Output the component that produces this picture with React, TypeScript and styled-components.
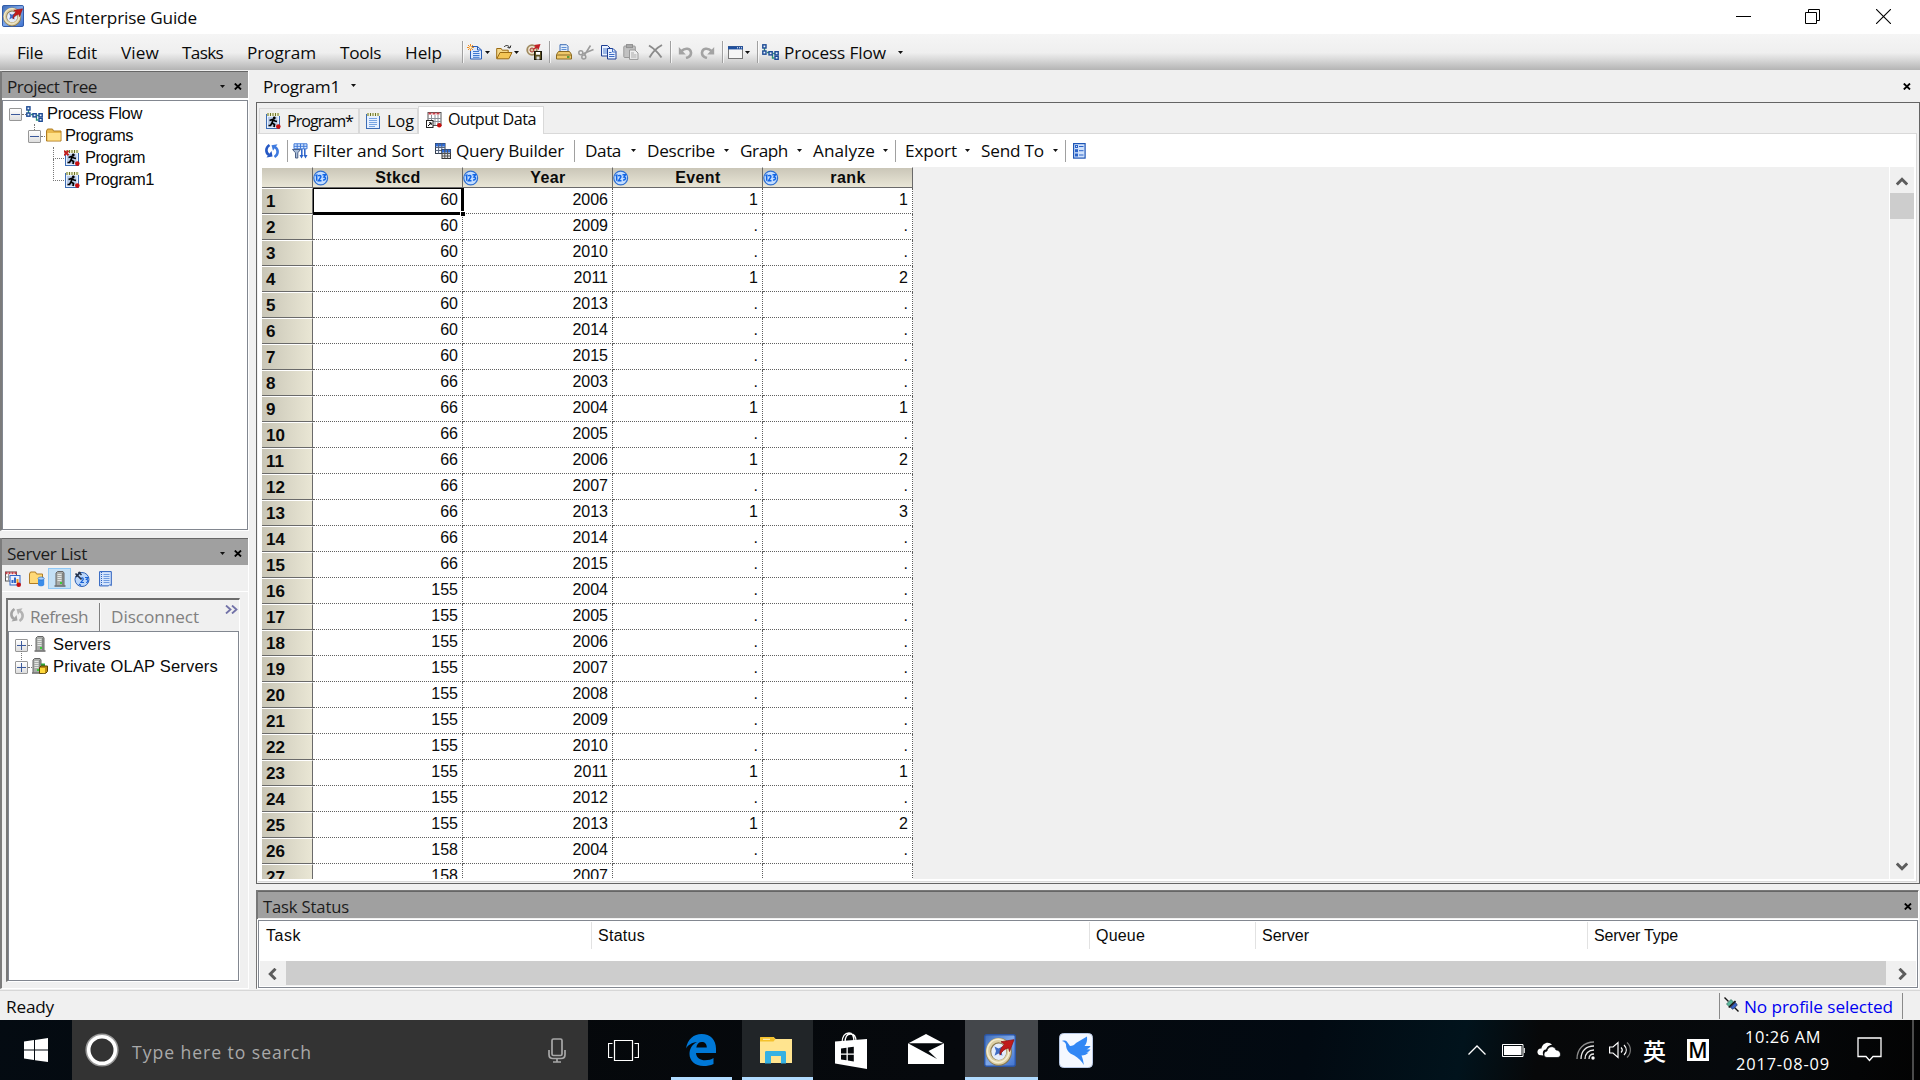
import React, { useLayoutEffect, useRef, useState } from "react";
import styled, { createGlobalStyle, css } from "styled-components";

const ui = `"Open Sans", "Noto Sans", sans-serif`;
const arial = `"Liberation Sans", Arial, sans-serif`;

const GlobalStyle = createGlobalStyle`
  * { box-sizing: border-box; }
  html, body { margin: 0; padding: 0; background: #f0f0f0; }
  body { width: 1920px; height: 1080px; overflow: hidden; }
  svg { display: block; flex: none; }
`;

/* ---------- text ---------- */

const LabelText = styled.span<{ $size: number; $font: string; $color: string; $bold?: boolean; $gap: number; $up: number }>`
  flex: none;
  display: block;
  white-space: pre;
  margin-left: ${(p) => p.$gap}px;
  margin-bottom: ${(p) => p.$up}px;
  font: ${(p) => (p.$bold ? 700 : 400)} ${(p) => p.$size}px / 1.3 ${(p) => p.$font};
  color: ${(p) => p.$color};
`;

type LabelProps = {
  children: string;
  w: number;
  size?: number;
  font?: string;
  color?: string;
  bold?: boolean;
  gap?: number;
  up?: number;
};

/* Caption that tracks its letters in or out to fill the given width. */
function Label({ children, w, size = 17.2, font = ui, color = "#0a0a0a", bold, gap = 0, up = 0 }: LabelProps) {
  const ref = useRef<HTMLSpanElement>(null);
  const [spacing, setSpacing] = useState(0);
  useLayoutEffect(() => {
    const el = ref.current;
    if (!el) return;
    const range = document.createRange();
    range.selectNodeContents(el);
    setSpacing((w - range.getBoundingClientRect().width) / children.length);
  }, [w, children]);
  return (
    <LabelText ref={ref} $size={size} $font={font} $color={color} $bold={bold} $gap={gap} $up={up} style={{ width: w, letterSpacing: spacing }}>
      {children}
    </LabelText>
  );
}

/* ---------- icons ---------- */

const Svg = styled.svg<{ $gap?: number; $up?: number }>`
  margin-left: ${(p) => p.$gap ?? 0}px;
  margin-bottom: ${(p) => p.$up ?? 0}px;
`;
type IconProps = { gap?: number; up?: number; size?: number };
const I = ({ w = 16, h = 16, vw, vh, gap, up, children }: { w?: number; h?: number; vw?: number; vh?: number; gap?: number; up?: number; children: React.ReactNode }) => (
  <Svg width={w} height={h} viewBox={`0 0 ${vw ?? w} ${vh ?? h}`} fill="none" $gap={gap} $up={up}>
    {children}
  </Svg>
);

const SasIcon = ({ w = 22, h = 22, gap }: { w?: number; h?: number; gap?: number }) => (
  <Svg width={w} height={h} viewBox="0 0 32 32" preserveAspectRatio="none" fill="none" $gap={gap}>
    <defs>
      <linearGradient id="sasbg" x1="0" y1="0" x2="1" y2="1">
        <stop offset="0" stopColor="#3d6cb8" />
        <stop offset="0.5" stopColor="#7fa8e8" />
        <stop offset="1" stopColor="#3f72cf" />
      </linearGradient>
    </defs>
    <rect x="0.7" y="0.7" width="30.6" height="30.6" rx="2" fill="url(#sasbg)" stroke="#2c56a5" strokeWidth="1.4" />
    <ellipse cx="14.8" cy="17.3" rx="10.3" ry="10.8" fill="#e4ecfa" stroke="#8a7a52" strokeWidth="5.6" />
    <ellipse cx="14.5" cy="16.8" rx="10.4" ry="10.8" stroke="#dccfa4" strokeWidth="4.2" />
    <ellipse cx="14.2" cy="16.4" rx="10.8" ry="11.2" stroke="#f4edd2" strokeWidth="1.4" />
    <path d="M10.500 12l4 2 4-2-1.500 4.500 1.500 4.500-4-2-4 2 1.500-4.500z" fill="#3f6cc4" />
    <path d="M30 5.500L17 7.500l3.500 2.500c-3.500 3-5 6.500-4.500 10.500 2-4 4.500-6 8.500-7l1 3.500z" fill="#c11b1b" stroke="#8b1010" strokeWidth="0.7" />
  </Svg>
);

const FlowIcon = ({ gap, up }: IconProps) => (
  <I w={17} h={16} gap={gap} up={up}>
    <path d="M2.500 4v5M5 8.500h3M10.500 11v3h2M11 9.500h2" stroke="#2c9377" strokeWidth="1.3" />
    <g stroke="#1c4a94" strokeWidth="1.400" fill="#eaf2ff">
      <rect x="0.8" y="0.800" width="3.200" height="3.200" />
      <rect x="0.8" y="7" width="3.200" height="3.200" />
      <rect x="7" y="7.700" width="3.200" height="3.200" />
      <rect x="13" y="7.700" width="3.200" height="3.200" />
      <rect x="13" y="12.300" width="3.200" height="3" />
    </g>
  </I>
);

const Notepad = ({ runner, deleted, gap, up }: IconProps & { runner?: boolean; deleted?: boolean }) => (
  <I w={16} h={16} gap={gap} up={up}>
    <rect x="1.500" y="1.500" width="13" height="14" fill="#e6f0ff" stroke="#3c6cb4" />
    <path d="M2 1.500h13" stroke="#f2f4d0" strokeWidth="3" />
    <path d="M3 0v3M5.500 0v3M8 0v3M10.500 0v3M13 0v3" stroke="#6b7128" strokeWidth="1" />
    {runner ? (
      <>
        <rect x="3" y="4" width="9.500" height="10" fill="#b9cbe6" />
        <circle cx="9.300" cy="5" r="1.400" fill="#000" />
        <path d="M4.500 7.500l3-1 2.500 1.500 2 .5M8 7.200L7 10l2.500 1.500-.5 2.500M7 10l-1.500 2.500H3.500" stroke="#000" strokeWidth="1.700" />
        <circle cx="13.300" cy="13.600" r="2.300" fill="#c80f0f" />
      </>
    ) : (
      <path d="M4 5.500h8M4 7.500h8M4 9.500h8M4 11.500h8M4 13.500h6" stroke="#77a4e2" />
    )}
    {deleted && <path d="M0 .8l4.500 4.500M4.500.8L0 5.300" stroke="#c22020" strokeWidth="2" />}
  </I>
);

const OutputIcon = ({ gap, up }: IconProps) => (
  <I gap={gap} up={up}>
    <rect x="2" y="0.500" width="13" height="13" fill="#fff" stroke="#555" />
    <path d="M2.500 1.500h12" stroke="#c9404a" strokeWidth="2" strokeDasharray="3 1" />
    <path d="M5.500 3v10M9 3v10M12 3v10M2 6.500h13M2 9.500h13" stroke="#8b9099" />
    <rect x="0.500" y="8.500" width="6.500" height="7" fill="#fff" stroke="#222" />
    <path d="M2 14l3-3M3 10.800h2.200V13" stroke="#000" />
    <circle cx="13.300" cy="13.300" r="2.300" fill="#c80f0f" />
  </I>
);

const Folder = ({ gap, up }: IconProps) => (
  <I w={16} h={14} gap={gap} up={up}>
    <path d="M.5 13V3l1-2h5l1 2h7.500v10z" fill="#e9b84d" stroke="#b07c22" />
    <path d="M1.500 12.500V5h13v7.500z" fill="#ffe08a" />
  </I>
);

const RefreshIcon = ({ gap, grey, up }: IconProps & { grey?: boolean }) => {
  const c = grey ? "#a3a3a3" : "#2558c4";
  return (
    <I gap={gap} up={up}>
      <path d="M5.500 2C1.500 4.500 1.300 9.500 5 12" stroke={c} strokeWidth="2.600" />
      <path d="M2.500 14.500l6-1-1-5.500z" fill={c} />
      <path d="M10.500 14c4-2.500 4.200-7.500.5-10" stroke={grey ? "#b3b3b3" : "#3f7be0"} strokeWidth="2.600" />
      <path d="M13.500 1.200l-6 1 1.500 5.500z" fill={grey ? "#b3b3b3" : "#3f7be0"} />
    </I>
  );
};

const NewIcon = ({ gap }: IconProps) => (
  <I gap={gap}>
    <path d="M3.500 2.500h7l4 3.500v9h-11z" fill="#dbe9ff" stroke="#2c5fb5" />
    <path d="M10.500 2.500V6h4" stroke="#2c5fb5" />
    <path d="M6 7.500h6M6 9.500h6.500M6 11.500h6.500M6 13.300h6.500" stroke="#3f78cf" />
    <path d="M3.500 0v7M0 3.500h7M1 1l5 5M6 1L1 6" stroke="#f08a1d" />
    <circle cx="3.500" cy="3.500" r="1.300" fill="#fff3c4" />
  </I>
);
const OpenIcon = ({ gap }: IconProps) => (
  <I w={17} gap={gap}>
    <path d="M.7 14.500v-10h4.500l1 1.700h6v2" fill="#f5d98c" stroke="#9a6a12" />
    <path d="M.8 14.800L4 8.500h12l-3.200 6.300z" fill="#f3c556" stroke="#9a6a12" />
    <path d="M8 3c1.500-2 4.500-2 5.500.5M11.500 3.500l2.500.5.800-2.500" stroke="#222" />
  </I>
);
const SasSaveIcon = ({ gap }: IconProps) => (
  <I gap={gap}>
    <circle cx="6" cy="6" r="4.800" stroke="#a08a60" strokeWidth="1.800" fill="#efe6cf" />
    <circle cx="6" cy="6" r="2" stroke="#a33" fill="#d9c6a0" />
    <path d="M14.500 0L8 1l1.500 1.500L6.500 6 11 4l1.500 2z" fill="#c22026" />
    <rect x="8.500" y="7.500" width="7" height="8" fill="#5a4e1e" stroke="#1d1a0c" />
    <rect x="10" y="8" width="4" height="2.700" fill="#fff" />
    <rect x="10.500" y="12.500" width="3" height="3" fill="#ddd" />
  </I>
);
const PrintIcon = ({ gap }: IconProps) => (
  <I gap={gap}>
    <path d="M4 8V.7h6.500l1.500 1.500V8z" fill="#e3eefc" stroke="#3c6cb4" />
    <path d="M5.500 3.500h5M5.500 5.500h5" stroke="#5d8fd6" />
    <path d="M2.500 7.500h11l2 3v4.500H.5v-4.500z" fill="#efc96a" stroke="#8a6a22" />
    <path d="M1 11h14" stroke="#8a6a22" />
    <path d="M11 13h2.500" stroke="#2c8c2c" strokeWidth="1.500" />
  </I>
);
const CutIcon = ({ gap }: IconProps) => (
  <I gap={gap}>
    <path d="M15.500 5.500L5 9.800M12.500 1.500L6.500 11" stroke="#9c9c9c" strokeWidth="1.600" />
    <circle cx="2.800" cy="8.800" r="2" stroke="#9c9c9c" strokeWidth="1.500" />
    <circle cx="5.800" cy="13" r="2" stroke="#9c9c9c" strokeWidth="1.500" />
  </I>
);
const CopyIcon = ({ gap }: IconProps) => (
  <I gap={gap}>
    <path d="M.5 1.500h6l2.500 2.500v8H.5z" fill="#eaf2ff" stroke="#1e3f93" />
    <path d="M2 5h4.500M2 7h4M2 9h4" stroke="#4f7ed0" />
    <path d="M6.500 4.500h5.500l3 3v7.500H6.500z" fill="#eaf2ff" stroke="#1e3f93" />
    <path d="M11.500 4.500V8H15M8 8.500h2.500M8 10.500h5.500M8 12.500h5.500" stroke="#3f6cc4" />
  </I>
);
const PasteIcon = ({ gap }: IconProps) => (
  <I gap={gap}>
    <rect x=".8" y="2" width="11.500" height="11.500" rx="1" fill="#c2c2c2" stroke="#999" />
    <rect x="3.500" y=".6" width="6" height="3" fill="#aaa" stroke="#8f8f8f" />
    <path d="M6.500 6h5.500l3 3v6.400H6.500z" fill="#eee" stroke="#999" />
    <path d="M8 9h3M8 11h5.500M8 13h5.500" stroke="#a9a9a9" />
  </I>
);
const DeleteIcon = ({ gap }: IconProps) => (
  <I w={15} h={15} gap={gap} up={2}>
    <path d="M1 1.500c5 3 9 7 12.500 12M14 1C8.500 4 4.500 8 1.500 13.500" stroke="#8b8b8b" strokeWidth="1.900" />
  </I>
);
const UndoIcon = ({ gap, flip }: IconProps & { flip?: boolean }) => (
  <I w={15} h={13} gap={gap}>
    <g transform={flip ? "translate(15 0) scale(-1 1)" : undefined}>
      <path d="M3.500 5C7 1.500 12.500 2 13 6.500c.2 2.500-1.500 4.500-5 5.500" stroke="#a3a3a3" strokeWidth="2.600" />
      <path d="M.8 1v7.500h7z" fill="#a3a3a3" />
    </g>
  </I>
);
const WindowIcon = ({ gap }: IconProps) => (
  <I w={15} h={13} gap={gap}>
    <rect x=".5" y=".5" width="14" height="12" fill="#f6f6f6" stroke="#777" />
    <path d="M0 1.800h15" stroke="#1e4f9e" strokeWidth="3.200" />
    <path d="M9 1.800h1M11 1.800h1M13 1.800h1" stroke="#fff" />
  </I>
);
const FilterIcon = ({ gap }: IconProps) => (
  <I gap={gap}>
    <path d="M2 .8h13v5H2zM5.200.8v5M8.500.8v5M11.800.8v5M2 3.300h13" stroke="#3f78d8" fill="#dceaff" />
    <path d="M.5 6.500h8L5.800 9.800V15H3.500V9.800z" fill="#a9bdd9" stroke="#4a5f86" />
    <path d="M9.800 6v7M12.800 6v7" stroke="#2a62c9" strokeWidth="1.500" />
    <path d="M7.500 12h4l-2 3.500zM11.500 12h4l-2 3.500z" fill="#2a62c9" />
  </I>
);
const QueryIcon = ({ gap }: IconProps) => (
  <I gap={gap}>
    <rect x=".5" y=".5" width="9.500" height="10" fill="#f4f8ff" stroke="#333c4d" />
    <path d="M.5 2h9.500" stroke="#2d6bd6" strokeWidth="3" />
    <path d="M3.600.5v10M6.800.5v10M.5 4.500h9.500M.5 7.500h9.500" stroke="#55657f" />
    <rect x="7" y="6.500" width="8.500" height="9" fill="#e6e6e6" stroke="#333" />
    <path d="M7 8h8.500" stroke="#2d6bd6" strokeWidth="3" />
    <path d="M9.800 6.500v9M12.600 6.500v9M7 10.500h8.500M7 13h8.500" stroke="#555" />
  </I>
);
const PropsIcon = ({ gap }: IconProps) => (
  <I w={13} h={16} gap={gap}>
    <rect x=".6" y=".6" width="11.500" height="14.500" fill="#cfe1fb" stroke="#1e55b5" strokeWidth="1.200" />
    <g stroke="#2a62c9"><rect x="2.500" y="2.500" width="2" height="2" /><rect x="2.500" y="6.700" width="2" height="2" /><rect x="2.500" y="11" width="2" height="2" /><path d="M6 3.500h4.500M6 7.700h4.500M6 12h4.500" /></g>
  </I>
);
const NumBadge = () => (
  <I w={16} h={16}>
    <circle cx="7.700" cy="8" r="6.900" fill="#c3ddff" stroke="#2e6fd0" strokeWidth="1.200" />
    <path d="M2.500 6l1.200-.8v5.600M5.300 6.300c.5-1.500 3-1 2.500.8L5.500 10.800h3M9.500 4.700h3L11 7c2.300 0 2 3.500-1 3" stroke="#1165e6" strokeWidth="1.500" />
  </I>
);
const ServerIcon = ({ gap, olap, up }: IconProps & { olap?: boolean }) => (
  <I w={16} h={16} gap={gap} up={up}>
    <g transform={olap ? "translate(-3 0)" : undefined}>
      <path d="M4 14.500V2l1.500-1.500H11L12 2v12.500" fill="#a9aca9" stroke="#666" />
      <path d="M5.500 3.500h4M5.500 5.500h4M5.500 7.500h4M5.500 9.500h4" stroke="#e3e6e3" />
      <path d="M10.800 2v12" stroke="#6f736f" />
      <path d="M8 12h2" stroke="#37d037" strokeWidth="2" />
      <path d="M2.500 15h11" stroke="#666" strokeWidth="1.500" />
    </g>
    {olap && (
      <>
        <path d="M9 5.500h4v4H9z" fill="#2da23a" />
        <path d="M7.500 9.500l1.500-1.500h6.500v5.500l-1.800 1.800H7.500z" fill="#b98a12" stroke="#5c4300" />
        <path d="M8 10h5v5H8z" fill="#ffd93b" />
      </>
    )}
  </I>
);
const ReportIcon = ({ gap }: IconProps) => (
  <I gap={gap}>
    <rect x=".5" y="1" width="11" height="9" fill="#fff" stroke="#555" />
    <path d="M.5 2h11" stroke="#c9404a" strokeWidth="2.500" strokeDasharray="2 1" />
    <path d="M3.500 3v7M.5 6h8" stroke="#999" />
    <rect x="5" y="4.500" width="10" height="9.500" fill="#e9f1ff" stroke="#2f67c7" />
    <path d="M7.500 12V9M10 12V6.500" stroke="#2f67c7" strokeWidth="2" /><path d="M12.500 12V8" stroke="#ef9b22" strokeWidth="2" />
    <circle cx="13.700" cy="13.700" r="2.300" fill="#c80f0f" />
  </I>
);
const FolderDataIcon = ({ gap }: IconProps) => (
  <I gap={gap}>
    <path d="M.5 12.500V3l1-2h5l1 2h6v9.500z" fill="#ffd977" stroke="#b07c22" />
    <path d="M9 7.500v6.500c1 1.700 5 1.700 6.200 0V7.500z" fill="#3b8ce8" />
    <ellipse cx="12.100" cy="7.500" rx="3.100" ry="1.500" fill="#a7d0ff" stroke="#1c62b9" strokeWidth=".6" />
  </I>
);
const GlobeIcon = ({ gap }: IconProps) => (
  <I gap={gap}>
    <circle cx="8" cy="8.500" r="7" fill="#bcd7fa" stroke="#2e62b5" />
    <path d="M7 7.500c2-1.500 3.200.5 1.500 2L7 11.500h3M11 6.500h3l-1.500 2c2 0 2 3-.5 3M5 13l2 1.500" stroke="#1761d6" strokeWidth="1.200" />
    <path d="M1.500 2.500l6 6M6.500 1L2 6M4.500 1l3 3" stroke="#26344c" strokeWidth="1.700" />
  </I>
);
const BookIcon = ({ gap }: IconProps) => (
  <I w={13} h={16} gap={gap}>
    <path d="M.6.600h11.700v14l-1.500-1-1.300 1.300H.6z" fill="#d5e5fd" stroke="#2a60bf" />
    <path d="M2.500 1v14" stroke="#2a60bf" strokeDasharray="1 1" />
    <path d="M4.500 3.500h6M4.500 5.500h6M4.500 7.500h6M4.500 9.500h6M4.500 11.500h6" stroke="#6f9be0" />
  </I>
);
const PlugIcon = () => (
  <I w={15} h={15} up={3}>
    <path d="M.5.500l4 4M10.500 10.500l4 4" stroke="#111" strokeWidth="1.400" />
    <path d="M2.500 7l4.500-4.500 2.500 2.500L5 9.500z" fill="#59b59a" stroke="#2c6d5c" strokeWidth=".7" />
    <path d="M6.500 10.500l5-5 1.800 2.500-4.300 4.300z" fill="#3762c4" stroke="#14255c" strokeWidth=".7" />
    <path d="M4.800 10.500L11.500 4" stroke="#111" strokeWidth="1.700" />
  </I>
);

const Arrow = ({ gap = 0, up = 0 }: { gap?: number; up?: number }) => (
  <I w={5} h={3} gap={gap} up={up}><path d="M0 0h5L2.500 3z" fill="#111" /></I>
);
const SmallX = ({ gap = 0 }: { gap?: number }) => (
  <I w={8} h={7} gap={gap} up={1}><path d="M.8.500l6.200 6M7 .5L.8 6.500" stroke="#000" strokeWidth="1.800" /></I>
);

/* ---------- title and menu bars ---------- */

const Screen = styled.div`
  width: 1920px; height: 1080px; display: flex; flex-direction: column;
  background: #f0f0f0; overflow: hidden;
`;
const TitleBar = styled.header`
  height: 34px; flex: none; display: flex; align-items: center; background: #fff; padding: 0 29px 2px 2px;
`;
const WindowButtons = styled.div`
  margin-left: auto; display: flex; align-items: center; gap: 54px;
`;
const MenuBar = styled.nav`
  height: 36px; flex: none; display: flex; align-items: center; padding-left: 17px;
  background: linear-gradient(#f5f5f5 0, #efefef 52%, #d8d8d8 72%, #b4b4b4 100%);
`;
const Sep = styled.i<{ $gap: number; $h?: number; $c?: string }>`
  flex: none; width: 2px; height: ${(p) => p.$h ?? 22}px; margin-left: ${(p) => p.$gap}px;
  border-left: 1px solid ${(p) => p.$c ?? "#a0a0a0"}; border-right: 1px solid #ffffffb0;
`;

/* ---------- body ---------- */

const Body = styled.main`height: 920px; flex: none; display: flex;`;
const SideColumn = styled.aside`
  width: 249px; flex: none; display: flex; flex-direction: column; padding-top: 1px;
`;
const Pane = styled.section<{ $h: number }>`
  height: ${(p) => p.$h}px; flex: none; display: flex; flex-direction: column;
  border-left: 2px solid #7c7c7c; border-right: 1px solid #fff; border-bottom: 1px solid #fff;
`;
const PaneHeader = styled.div<{ $right: number }>`
  height: 27px; flex: none; display: flex; align-items: center; background: #a0a0a0;
  border-top: 1px solid #666; padding: 3px ${(p) => p.$right}px 0 5px;
`;
const Push = styled.div`margin-left: auto; display: flex; align-items: center;`;
const TreeBox = styled.div<{ $top: number }>`
  flex: 1; border: 1px solid #828790; background: #fff; padding-top: ${(p) => p.$top}px;
`;
const TreeShell = styled.div`flex: 1; display: flex; flex-direction: column; background: #fff; padding-top: 2px;`;
const TreeRow = styled.div<{ $indent: number }>`
  height: 22px; display: flex; align-items: center; padding-left: ${(p) => p.$indent}px;
`;
const Expander = styled.span<{ $plus?: boolean }>`
  flex: none; width: 13px; height: 13px; border: 1px solid #979797; border-radius: 1px;
  background:
    linear-gradient(#3c5a9c, #3c5a9c) center / 9px 1px no-repeat,
    ${(p) => (p.$plus ? "linear-gradient(#3c5a9c, #3c5a9c) center / 1px 9px no-repeat," : "")}
    linear-gradient(#fff, #dedede);
`;
const Dots = styled.span<{ $w: number; $drop?: number }>`
  flex: none; width: ${(p) => p.$w}px; height: 1px; border-top: 1px dotted #777; position: relative;
  ${(p) => p.$drop && css`&::before { content: ""; position: absolute; left: 0; bottom: 0; height: ${p.$drop}px; border-left: 1px dotted #777; }`}
`;
const Stem = styled.span<{ $x: number; $h: number; $up: number }>`
  position: relative; width: 0; height: 0;
  &::before { content: ""; position: absolute; left: ${(p) => p.$x}px; bottom: ${(p) => p.$up}px; height: ${(p) => p.$h}px; border-left: 1px dotted #777; }
`;
const ServerTools = styled.div`
  height: 27px; flex: none; display: flex; align-items: center; padding: 1px 0 0 3px; border-bottom: 1px solid #fff;
`;
const ActiveTool = styled.span`
  width: 23px; height: 21px; margin-left: 3px; display: flex; align-items: center; justify-content: center;
  border: 1px solid #90c8f6; background: #c4e0f5;
`;
const InnerPane = styled.div`
  width: 234px; height: 384px; margin: 6px 0 0 4px; display: flex; flex-direction: column;
  border-left: 2px solid #777; border-top: 2px solid #6c6c6c; border-right: 1px solid #fff; border-bottom: 1px solid #fff;
`;
const InnerTools = styled.div`height: 31px; flex: none; display: flex; align-items: center; padding: 2px 3px 0 1px;`;

const MainColumn = styled.div`
  width: 1664px; margin-left: 7px; flex: none; display: flex; flex-direction: column;
`;
const DocHeader = styled.div`
  height: 32px; flex: none; display: flex; align-items: center; padding: 2px 9px 0 7px;
`;
const DocPanel = styled.section`
  height: 782px; flex: none; display: flex; flex-direction: column; border: 1px solid #646464; padding: 0 2px 1px 1px;
`;
const TabStrip = styled.div`
  height: 31px; flex: none; display: flex; align-items: flex-end; border-bottom: 1px solid #d9d9d9; padding-left: 1px;
`;
const Tab = styled.div<{ $w: number; $active?: boolean }>`
  width: ${(p) => p.$w}px; height: ${(p) => (p.$active ? 28 : 25)}px; flex: none; display: flex; align-items: center;
  border: 1px solid #d9d9d9; border-bottom: 0; margin-bottom: ${(p) => (p.$active ? -1 : 0)}px;
  background: ${(p) => (p.$active ? "#fff" : "#f0f0f0")};
  & + & { border-left-width: ${(p) => (p.$active ? 1 : 0)}px; }
`;
const DocBody = styled.div`
  flex: 1; display: flex; flex-direction: column; background: #fff; border-right: 1px solid #d9d9d9; border-bottom: 1px solid #d9d9d9;
  min-height: 0; padding-bottom: 2px;
`;
const DataTools = styled.div`height: 33px; flex: none; display: flex; align-items: center; padding-left: 6px;`;
const GridArea = styled.div`flex: 1; min-height: 0; display: flex; margin: 0 1px 0 4px; background: #f0f0f0; overflow: hidden;`;
const Grid = styled.div`width: 651px; flex: none; background: #fff;`;
const GridRow = styled.div`
  display: grid; grid-template-columns: 51px repeat(4, 150px); height: 26px;
`;
const HeadRow = styled(GridRow)`height: 21px;`;
const HeadCell = styled.div`
  display: flex; align-items: center; border-right: 1px solid #6a6a6a; border-bottom: 1px solid #6a6a6a;
  border-top: 1px solid #fff; background: linear-gradient(#cac6b8, #e9e6d6); overflow: hidden;
`;
const HeadName = styled.span`
  flex: 1; text-align: center; font: 700 16px/18px ${arial}; color: #0a0a0a; padding-left: 5px; letter-spacing: 0.4px;
`;
const RowHead = styled.div`
  border-right: 1px solid #6a6a6a; border-bottom: 1px solid #6a6a6a; border-top: 1px solid #fff;
  background: linear-gradient(90deg, #c9c6b7, #e9e6d4); padding: 4px 0 0 4px;
  font: 700 17px/18px ${arial}; color: #0a0a0a;
`;
const Cell = styled.div<{ $selected?: boolean }>`
  position: relative; border-right: 1px dotted #606060; border-bottom: 1px dotted #606060;
  text-align: right; padding: 3px 4px 0 0; font: 400 16px/18px ${arial}; color: #0a0a0a;
  ${(p) => p.$selected && css`
    &::before { content: ""; position: absolute; left: 0; top: 0; right: -2px; bottom: -2px; z-index: 1;
      border: solid #000; border-width: 1px 3px 3px 1px; }
    &::after { content: ""; position: absolute; right: -3px; bottom: -3px; width: 4px; height: 4px; z-index: 2;
      background: #000; border-left: 1px solid #fff; border-top: 1px solid #fff; }
  `}
`;
const VScroll = styled.div`
  margin-left: auto; width: 26px; flex: none; display: flex; flex-direction: column; align-items: center;
  border-left: 1px solid #fff; border-right: 1px solid #fff;
`;
const VThumb = styled.div`width: 24px; height: 26px; margin-top: 7px; background: #cdcdcd;`;
const VGap = styled.div<{ $h?: number }>`${(p) => (p.$h ? `height: ${p.$h}px;` : "flex: 1;")}`;

const TaskPanel = styled.section`
  height: 99px; margin-top: 6px; width: 1663px; display: flex; flex-direction: column;
  border: solid #777; border-width: 1px 0 0 2px; border-right: 1px solid #fff; border-bottom: 1px solid #fff;
`;
const TaskBox = styled.div`
  flex: 1; margin-top: 2px; border: 1px solid #828790; background: #fff; display: flex; flex-direction: column; outline: 1px solid #fff; outline-offset: 0;
`;
const TaskHead = styled.div`display: flex; height: 28px; padding-top: 1px; flex: none;`;
const TaskCol = styled.div<{ $w: number }>`
  width: ${(p) => p.$w}px; flex: none; display: flex; align-items: center; padding: 2px 0 0 6px; overflow: hidden;
  border-right: 1px solid #e2e2e2;
  &:last-child { border-right: 0; }
`;
const HScroll = styled.div`
  height: 25px; margin: 12px 1px 0; display: flex; align-items: center; background: #f0f0f0; padding: 0 9px 0 8px;
`;
const HThumb = styled.div`width: 1600px; height: 24px; align-self: flex-start; margin: 0 12px 0 9px; background: #cdcdcd;`;

const StatusBar = styled.footer`
  height: 30px; flex: none; border-top: 1px solid #d7d7d7; display: flex; align-items: center; padding: 1px 17px 0 6px;
`;
const Profile = styled.div`
  margin-left: auto; width: 184px; height: 26px; display: flex; align-items: center; padding-left: 4px;
  border-left: 1px solid #8a8a8a; border-right: 1px solid #8a8a8a;
`;

/* ---------- taskbar ---------- */

const Taskbar = styled.div`
  height: 60px; flex: none; display: flex; align-items: stretch;
  background: linear-gradient(100deg, #040b12 0, #05080b 25%, #06090d 50%, #020a12 68%, #01131c 76%, #070809 80%, #06090c 90%, #030303 100%);
`;
const Start = styled.div`width: 72px; flex: none; display: flex; align-items: center; padding-left: 24px;`;
const Search = styled.div`width: 516px; flex: none; display: flex; align-items: center; background: #333; padding-left: 13px;`;
const Tile = styled.div<{ $w: number; $bg?: string; $bar?: number; $left?: number }>`
  width: ${(p) => p.$w}px; flex: none; display: flex; align-items: center; justify-content: center;
  padding-right: ${(p) => p.$left ?? 0}px;
  background:
    ${(p) => (p.$bar ? `linear-gradient(#b0dbff, #b0dbff) center bottom / ${p.$bar}px 3px no-repeat,` : "")}
    linear-gradient(${(p) => p.$bg ?? "transparent"}, ${(p) => p.$bg ?? "transparent"});
`;
const Tray = styled.div`margin-left: auto; width: 452px; display: flex; align-items: center;`;
const Ime = styled.span`margin-left: 12px; width: 23px; font: 500 23px/26px "Noto Sans CJK SC", sans-serif; color: #fff;`;
const ImeMode = styled.span`
  margin-left: 21px; width: 22px; height: 22px; background: #fff; color: #000; text-align: center; font: 600 21px/22px ${ui};
`;
const Clock = styled.div`margin-left: 25px; width: 98px; display: flex; flex-direction: column; align-items: center; gap: 6px;`;
const Peek = styled.i`width: 8px; align-self: stretch; margin-left: auto; border-left: 2px solid #4b4b4b;`;

/* ---------- data ---------- */

const rows: [number, number, string, string][] = [
  [60, 2006, "1", "1"], [60, 2009, ".", "."], [60, 2010, ".", "."], [60, 2011, "1", "2"], [60, 2013, ".", "."],
  [60, 2014, ".", "."], [60, 2015, ".", "."], [66, 2003, ".", "."], [66, 2004, "1", "1"], [66, 2005, ".", "."],
  [66, 2006, "1", "2"], [66, 2007, ".", "."], [66, 2013, "1", "3"], [66, 2014, ".", "."], [66, 2015, ".", "."],
  [155, 2004, ".", "."], [155, 2005, ".", "."], [155, 2006, ".", "."], [155, 2007, ".", "."], [155, 2008, ".", "."],
  [155, 2009, ".", "."], [155, 2010, ".", "."], [155, 2011, "1", "1"], [155, 2012, ".", "."], [155, 2013, "1", "2"],
  [158, 2004, ".", "."], [158, 2007, "", ""],
];

const Chevron = ({ d, w, h }: { d: string; w: number; h: number }) => (
  <I w={w} h={h}><path d={d} stroke="#5c5c5c" strokeWidth="3" /></I>
);

export default function App() {
  return (
    <Screen>
      <GlobalStyle />
      <TitleBar>
        <SasIcon />
        <Label w={166} gap={7} up={-4}>SAS Enterprise Guide</Label>
        <WindowButtons>
          <I w={15} h={15}><path d="M0 7.500h15" stroke="#000" /></I>
          <I w={15} h={15}><path d="M.5 3.500h11v11H.500zM3.500 3.500v-3h11v11h-3" stroke="#000" /></I>
          <I w={15} h={15} gap={2}><path d="M0 0l15 15M15 0L0 15" stroke="#000" strokeWidth="1.100" /></I>
        </WindowButtons>
      </TitleBar>

      <MenuBar>
        <Label w={26} up={-2}>File</Label>
        <Label w={30} gap={24} up={-2}>Edit</Label>
        <Label w={38} gap={24} up={-2}>View</Label>
        <Label w={41} gap={23} up={-2}>Tasks</Label>
        <Label w={69} gap={24} up={-2}>Program</Label>
        <Label w={41} gap={24} up={-2}>Tools</Label>
        <Label w={37} gap={24} up={-2}>Help</Label>
        <Sep $gap={20} />
        <NewIcon gap={3} /><Arrow gap={2} />
        <OpenIcon gap={6} /><Arrow gap={1} />
        <SasSaveIcon gap={7} />
        <Sep $gap={7} />
        <PrintIcon gap={5} />
        <CutIcon gap={6} />
        <CopyIcon gap={7} />
        <PasteIcon gap={6} />
        <DeleteIcon gap={9} />
        <Sep $gap={7} />
        <UndoIcon gap={6} />
        <UndoIcon gap={7} flip />
        <Sep $gap={7} />
        <WindowIcon gap={4} /><Arrow gap={2} />
        <Sep $gap={7} />
        <FlowIcon gap={3} />
        <Label w={102} gap={5} up={-2}>Process Flow</Label>
        <Arrow gap={12} />
      </MenuBar>

      <Body>
        <SideColumn>
          <Pane $h={460}>
            <PaneHeader $right={6}>
              <Label w={90} color="#1c1c1c" up={-2}>Project Tree</Label>
              <Push><Arrow /><SmallX gap={9} /></Push>
            </PaneHeader>
            <TreeShell>
              <TreeBox $top={2}>
                <TreeRow $indent={6}>
                  <Expander /><Dots $w={4} /><FlowIcon />
                  <Label w={95} size={16.5} font={arial} gap={4}>Process Flow</Label>
                </TreeRow>
                <TreeRow $indent={25}>
                  <Stem $x={6} $h={6} $up={6} /><Expander /><Dots $w={4} /><Folder gap={1} up={3} />
                  <Label w={68} size={16.5} font={arial} gap={3}>Programs</Label>
                </TreeRow>
                <TreeRow $indent={50}>
                  <Dots $w={11} $drop={12} /><Notepad runner deleted gap={0} />
                  <Label w={60} size={16.5} font={arial} gap={5}>Program</Label>
                </TreeRow>
                <TreeRow $indent={50}>
                  <Dots $w={11} $drop={22} /><Notepad runner gap={0} />
                  <Label w={69} size={16.5} font={arial} gap={5}>Program1</Label>
                </TreeRow>
              </TreeBox>
            </TreeShell>
          </Pane>

          <VGap $h={7} />
          <Pane $h={451}>
            <PaneHeader $right={6}>
              <Label w={80} color="#1c1c1c" up={-2}>Server List</Label>
              <Push><Arrow /><SmallX gap={9} /></Push>
            </PaneHeader>
            <ServerTools>
              <ReportIcon />
              <FolderDataIcon gap={8} />
              <ActiveTool><ServerIcon /></ActiveTool>
              <GlobeIcon gap={3} />
              <BookIcon gap={9} />
            </ServerTools>
            <InnerPane>
              <InnerTools>
                <RefreshIcon grey up={3} />
                <Label w={58} gap={5} color="#808080" up={-1}>Refresh</Label>
                <Sep $gap={11} $h={28} $c="#808080" />
                <Label w={88} gap={10} color="#808080" up={-1}>Disconnect</Label>
                <I w={13} h={9} gap={26} up={15}><path d="M1 .5l4.500 4L1 8.500M7 .5l4.500 4L7 8.500" stroke="#7272a8" strokeWidth="1.800" /></I>
              </InnerTools>
              <TreeBox $top={2}>
                <TreeRow $indent={6}>
                  <Expander $plus /><Dots $w={4} /><ServerIcon gap={0} up={3} />
                  <Label w={58} size={16.5} font={arial} gap={5}>Servers</Label>
                </TreeRow>
                <TreeRow $indent={6}>
                  <Stem $x={6} $h={9} $up={7} /><Expander $plus /><Dots $w={4} /><ServerIcon gap={0} up={3} olap />
                  <Label w={165} size={16.5} font={arial} gap={5}>Private OLAP Servers</Label>
                </TreeRow>
              </TreeBox>
            </InnerPane>
          </Pane>
        </SideColumn>

        <MainColumn>
          <DocHeader>
            <Label w={77}>Program1</Label><Arrow gap={11} up={3} />
            <Push><SmallX /></Push>
          </DocHeader>
          <DocPanel>
            <TabStrip>
              <Tab $w={100}>
                <Notepad runner gap={5} />
                <Label w={66} gap={6} size={16.2} up={-1}>Program*</Label>
              </Tab>
              <Tab $w={59}>
                <Notepad gap={5} />
                <Label w={27} gap={6} size={16.2} up={-1}>Log</Label>
              </Tab>
              <Tab $w={126} $active>
                <OutputIcon gap={7} up={2} />
                <Label w={88} gap={6} size={16.2} up={2}>Output Data</Label>
              </Tab>
            </TabStrip>
            <DocBody>
              <DataTools>
                <RefreshIcon />
                <Sep $gap={7} />
                <FilterIcon gap={3} />
                <Label w={111} gap={5} up={-2}>Filter and Sort</Label>
                <QueryIcon gap={11} />
                <Label w={108} gap={5} up={-2}>Query Builder</Label>
                <Sep $gap={10} />
                <Label w={36} gap={9} up={-2}>Data</Label><Arrow gap={10} />
                <Label w={68} gap={11} up={-2}>Describe</Label><Arrow gap={9} />
                <Label w={48} gap={11} up={-2}>Graph</Label><Arrow gap={9} />
                <Label w={62} gap={11} up={-2}>Analyze</Label><Arrow gap={8} />
                <Sep $gap={7} />
                <Label w={52} gap={8} up={-2}>Export</Label><Arrow gap={8} />
                <Label w={63} gap={11} up={-2}>Send To</Label><Arrow gap={9} />
                <Sep $gap={7} />
                <PropsIcon gap={6} />
              </DataTools>
              <GridArea>
                <Grid>
                  <HeadRow>
                    <HeadCell />
                    {["Stkcd", "Year", "Event", "rank"].map((n) => (
                      <HeadCell key={n}><NumBadge /><HeadName>{n}</HeadName></HeadCell>
                    ))}
                  </HeadRow>
                  {rows.map((r, i) => (
                    <GridRow key={i}>
                      <RowHead>{i + 1}</RowHead>
                      {r.map((v, j) => <Cell key={j} $selected={i === 0 && j === 0}>{v}</Cell>)}
                    </GridRow>
                  ))}
                </Grid>
                <VScroll>
                  <VGap $h={10} />
                  <Chevron w={12} h={9} d="M.8 7.500L6 2.300l5.200 5.200" />
                  <VThumb />
                  <VGap />
                  <Chevron w={12} h={9} d="M.8 1.500L6 6.700l5.200-5.200" />
                  <VGap $h={8} />
                </VScroll>
              </GridArea>
            </DocBody>
          </DocPanel>

          <TaskPanel>
            <PaneHeader $right={6}>
              <Label w={86} color="#1c1c1c" size={16.6}>Task Status</Label>
              <Push><SmallX /></Push>
            </PaneHeader>
            <TaskBox>
              <TaskHead>
                <TaskCol $w={333}><Label w={35} size={16} font={arial} gap={1}>Task</Label></TaskCol>
                <TaskCol $w={498}><Label w={47} size={16} font={arial}>Status</Label></TaskCol>
                <TaskCol $w={166}><Label w={49} size={16} font={arial}>Queue</Label></TaskCol>
                <TaskCol $w={332}><Label w={47} size={16} font={arial}>Server</Label></TaskCol>
                <TaskCol $w={320}><Label w={84} size={16} font={arial}>Server Type</Label></TaskCol>
              </TaskHead>
              <HScroll>
                <Chevron w={9} h={12} d="M7.500 .8L2.300 6l5.200 5.200" />
                <HThumb />
                <Chevron w={9} h={12} d="M1.500 .8L6.700 6l-5.200 5.200" />
              </HScroll>
            </TaskBox>
          </TaskPanel>
        </MainColumn>
      </Body>

      <StatusBar>
        <Label w={48} up={-2}>Ready</Label>
        <Profile>
          <PlugIcon />
          <Label w={149} gap={5} color="#0000f0" up={-2}>No profile selected</Label>
        </Profile>
      </StatusBar>

      <Taskbar>
        <Start>
          <I w={24} h={24}><path d="M0 3.500l10-1.400v9.400H0zM11 2l13-2v11.500H11zM0 12.500h10v9.400L0 20.500zM11 12.500h13V24l-13-1.800z" fill="#fff" /></I>
        </Start>
        <Search>
          <I w={34} h={34}>
            <circle cx="17" cy="17" r="15.600" stroke="#9a9a9a" strokeWidth="2" />
            <circle cx="17" cy="17" r="13.300" stroke="#fff" strokeWidth="3.600" />
          </I>
          <Label w={180} gap={13} size={17.6} color="#a9a9a9" up={-4}>Type here to search</Label>
          <I w={18} h={25} gap={236}>
            <rect x="4" y="1" width="10" height="16.500" rx="1.500" stroke="#a8a8a8" strokeWidth="1.700" />
            <path d="M1 12v4.500c0 2.500 1.500 4 4 4h8c2.500 0 4-1.500 4-4V12M9 20.500V24M5 24h8" stroke="#a8a8a8" strokeWidth="1.700" />
          </I>
        </Search>
        <Tile $w={72} $left={1}>
          <I w={31} h={21}><path d="M6.500.500h18v20h-18zM4.500 3.500h-4v14h4M26.500 3.500h4v14h-4" stroke="#fff" strokeWidth="1.200" /></I>
        </Tile>
        <Tile $w={82} $bar={61}>
          <I w={30} h={32}>
            <path d="M0 14.500C1.500 5 8 0 15.500 0 24.500 0 30 6 30 14.500V19H10c.3 5 4.500 7.300 9 7.300 3.500 0 6.500-1 8.500-2.300v6c-3 1.500-6.500 2-10 2C9 32 3.500 26.500 3.500 20c0-5 2.500-9.500 7.500-12-5 .5-9 3-11 6.500zM10.300 13.500h10.500c0-3.500-1.800-5.500-5-5.500-3 0-5 2-5.500 5.500z" fill="#0078d7" fillRule="evenodd" />
          </I>
        </Tile>
        <Tile $w={71} $bg="#212528" $bar={71} $left={4}>
          <I w={32} h={27}>
            <path d="M0 26V1.500C0 .5.500 0 1.500 0h12l2 2H32v24z" fill="#ffe48f" />
            <path d="M0 4.500V1.500C0 .5.500 0 1.500 0h12l2 2-2 2.500z" fill="#f4c12c" />
            <path d="M3 2.300h7" stroke="#fff4c8" />
            <path d="M5 26.500V15.500c0-1 .5-1.500 1.500-1.500h18c1 0 1.500.5 1.500 1.500v11h-5V19H11v7.500z" fill="#35b1e3" />
          </I>
        </Tile>
        <Tile $w={76}>
          <I w={32} h={37}>
            <path d="M0 9.500l32-2.500v30L0 31.500z" fill="#fff" />
            <path d="M7 11C7 4 10 1 14 1s5 4 5 9M10 11c0-6 2-9 5.500-9S21 5 21 9.500" stroke="#fff" strokeWidth="1.300" />
            <path d="M6 16.500l5.500-.8v5.800H6zM12.800 15.500l6-.8v6.800h-6zM6 22.700h5.500v5.600l-5.500-.7zM12.800 22.700h6v6.800l-6-.9z" fill="#05080b" />
          </I>
        </Tile>
        <Tile $w={76} $left={2}>
          <I w={36} h={30} up={2}>
            <path d="M0 9.500L18 0l18 9.500V30H0z" fill="#fff" />
            <path d="M0 9.300h36L20.500 17l8.500 8L0 9.300z" fill="#05080b" />
          </I>
        </Tile>
        <Tile $w={73} $bg="#44474b" $bar={73} $left={3}><SasIcon w={32} h={33} /></Tile>
        <Tile $w={76}>
          <I w={34} h={35}>
            <rect x=".5" y=".5" width="33" height="34" rx="4" fill="#f4f8ff" stroke="#b9c9e6" />
            <path d="M3 8c2-1 4.500-.5 5.500 1.500l2.500 3.500c2.500 0 4.500-1.200 6-3L28 3.500c.5 4-.5 7.500-2.500 9.500l6 0c-1 1.800-2 2.800-4 3.200l4 .3c-1 1.600-2.300 2.700-4.300 2.900h2.300c-1.500 1.800-4 3-7 3 1.200 3 2 6 2.300 9.500-2-4-5.500-7-9.500-9.500C10 20.500 7 17 7 11.500 6.500 9.500 5 8.500 3 8z" fill="#3187f5" />
          </I>
        </Tile>
        <Tray>
          <I w={18} h={10}><path d="M.5 9.500L9 1l8.500 8.500" stroke="#fff" strokeWidth="1.300" /></I>
          <I w={23} h={13} gap={16}><path d="M.5.500h20.500v12H.500zM22.300 4v5" stroke="#fff" /><rect x="2" y="2" width="17.500" height="9" fill="#fff" /></I>
          <I w={24} h={16} gap={12}>
            <path d="M2 13c-3-2-1.500-7 2.500-6.500C5 1 12-1.500 15 3c-4 0-5 2.500-6 4.500-3 0-4 3.500-2.500 6z" fill="#fff" />
            <path d="M10 15.500c-4 0-4-6 0-6.500.5-5 7.500-6 9-1 5 0 6.500 7.500 1 7.500z" fill="#fff" stroke="#05080b" strokeWidth=".7" />
          </I>
          <I w={19} h={19} gap={15}>
            <path d="M1 18C1 8 8 1 18 1" stroke="#8d8d8d" strokeWidth="1.300" />
            <path d="M5 18C5 10 10 5 18 5M9 18c0-5.500 3.500-9 9-9M13 18c0-3 2-5 5-5" stroke="#e8e8e8" strokeWidth="1.300" />
            <circle cx="17" cy="17" r="1.700" fill="#fff" />
          </I>
          <I w={22} h={18} gap={14}>
            <path d="M.6 6H4l5-4.500v15L4 12H.6z" stroke="#fff" strokeWidth="1.200" />
            <path d="M12 6.500c1.500 1.500 1.500 3.500 0 5M15 4c3 3 3 7 0 10" stroke="#fff" strokeWidth="1.200" />
            <path d="M18 1.500c4.500 4 4.500 11 0 15" stroke="#777" strokeWidth="1.200" />
          </I>
          <Ime>英</Ime>
          <ImeMode>M</ImeMode>
          <Clock>
            <Label w={76} size={16.400} color="#fff">10:26 AM</Label>
            <Label w={94} size={16.400} color="#fff">2017-08-09</Label>
          </Clock>
          <I w={25} h={25} gap={25} up={1}><path d="M1 1h23v18.500h-8L12.500 23.500 9 19.500H1z" stroke="#fff" strokeWidth="1.300" /></I>
          <Peek />
        </Tray>
      </Taskbar>
    </Screen>
  );
}
